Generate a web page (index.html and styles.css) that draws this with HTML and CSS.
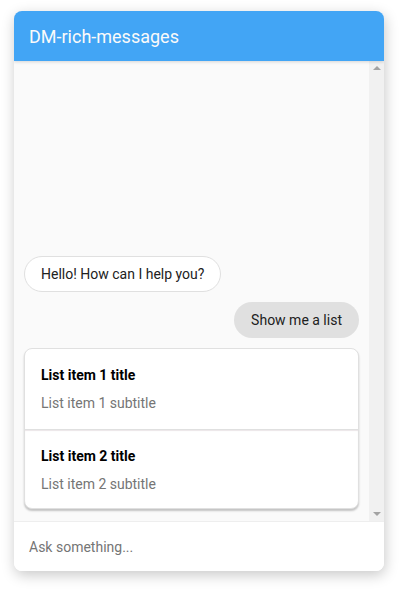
FILE: index.html
```html
<!DOCTYPE html>
<html>
<head>
<meta charset="utf-8">
<link rel="stylesheet" href="styles.css">
</head>
<body>
<div class="chat">
  <div class="header">DM-rich-messages</div>
  <div class="body">
    <div class="messages">
      <div class="msg bot">Hello! How can I help you?</div>
      <div class="msg user">Show me a list</div>
      <div class="card">
        <div class="item">
          <div class="title">List item 1 title</div>
          <div class="subtitle">List item 1 subtitle</div>
        </div>
        <div class="item">
          <div class="title">List item 2 title</div>
          <div class="subtitle">List item 2 subtitle</div>
        </div>
      </div>
    </div>
    <div class="scrollbar">
      <div class="arrow up"></div>
      <div class="arrow down"></div>
    </div>
  </div>
  <div class="input">Ask something...</div>
</div>
</body>
</html>
```
FILE: styles.css
```css
html, body {
  margin: 0;
  padding: 0;
  background: #ffffff;
  font-family: Roboto, "Liberation Sans", sans-serif;
}
body {
  padding: 11px 16px 0 14px;
  min-height: 590px;
  box-sizing: border-box;
}
.chat {
  width: 370px;
  height: 560px;
  border-radius: 8px;
  box-shadow: 1px 4px 14px rgba(0,0,0,0.22);
  display: flex;
  flex-direction: column;
  overflow: hidden;
  background: #fff;
}
.header {
  height: 50px;
  flex: none;
  background: #42a5f5;
  color: #fafafa;
  font-size: 18px;
  display: flex;
  align-items: center;
  padding-left: 15px;
  box-sizing: border-box;
  box-shadow: 0 1px 3px rgba(0,0,0,0.15);
  position: relative;
  z-index: 1;
}
.body {
  height: 460px;
  flex: none;
  display: flex;
  background: #fafafa;
}
.messages {
  flex: 1;
  display: flex;
  flex-direction: column;
  justify-content: flex-end;
  gap: 10px;
  padding: 0 10px 12px 10px;
}
.msg {
  font-size: 14px;
  line-height: 18px;
  border-radius: 20px;
  padding: 8px 16px;
  color: #212121;
}
.bot {
  align-self: flex-start;
  background: #fff;
  border: 1px solid #e0e0e0;
}
.user {
  align-self: flex-end;
  background: #e0e0e0;
  padding: 9px 17px;
}
.card {
  background: #fff;
  border: 1px solid #e0e0e0;
  border-radius: 8px;
  box-shadow: 0 2px 2px rgba(0,0,0,0.22);
}
.item {
  padding: 16px 16px 16px 16px;
}
.item + .item {
  border-top: 1px solid #e0e0e0;
  box-shadow: inset 0 1px 1px rgba(120,90,100,0.15);
  padding-bottom: 14px;
}
.title {
  font-size: 14px;
  line-height: 20px;
  font-weight: 700;
  color: #000;
}
.subtitle {
  font-size: 14px;
  line-height: 20px;
  color: #757575;
  margin-top: 8px;
}
.scrollbar {
  width: 15px;
  flex: none;
  background: #f1f1f1;
  display: flex;
  flex-direction: column;
  justify-content: space-between;
  align-items: center;
  padding: 5px 0;
  box-sizing: border-box;
}
.arrow {
  width: 0;
  height: 0;
  border-left: 4px solid transparent;
  border-right: 4px solid transparent;
}
.up {
  border-bottom: 4px solid #a3a3a3;
}
.down {
  border-top: 4px solid #a3a3a3;
}
.input {
  height: 50px;
  flex: none;
  border-top: 1px solid #eeeeee;
  box-sizing: border-box;
  display: flex;
  align-items: center;
  padding-left: 15px;
  font-size: 14px;
  color: #757575;
  background: #fff;
}
```
